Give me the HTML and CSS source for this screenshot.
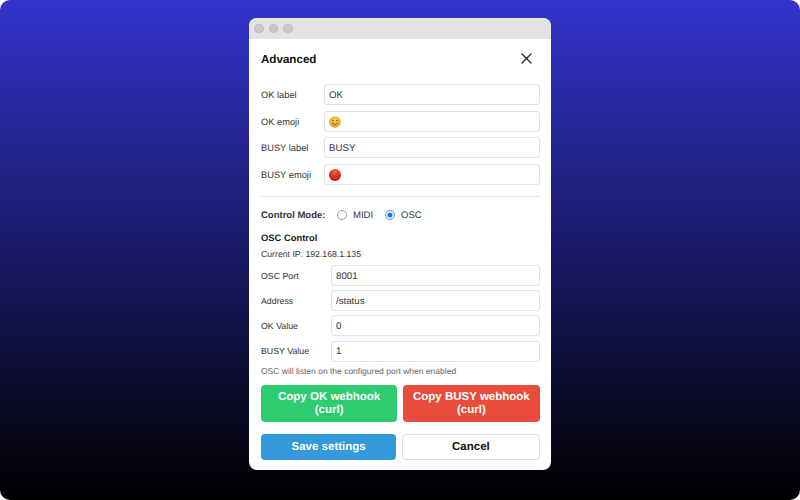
FILE: index.html
```html
<!DOCTYPE html>
<html lang="en">
<head>
    <meta charset="UTF-8">
    <title>Advanced</title>
    <link rel="stylesheet" href="styles.css">
</head>
<body>
    <div class="window">
        <div class="title-bar">
            <span class="light"></span>
            <span class="light"></span>
            <span class="light"></span>
        </div>
        <div class="content">
            <div class="head">
                <h1>Advanced</h1>
                <svg class="close" width="11" height="11" viewBox="0 0 11 11">
                    <path d="M1 1 L10 10 M10 1 L1 10" stroke="#222" stroke-width="1.3" stroke-linecap="round" fill="none"/>
                </svg>
            </div>

            <div class="rows">
                <div class="row"><label>OK label</label><div class="field">OK</div></div>
                <div class="row">
                    <label>OK emoji</label>
                    <div class="field">
                        <svg width="12" height="12" viewBox="0 0 12 12">
                            <defs>
                                <radialGradient id="smile" cx="50%" cy="35%" r="65%">
                                    <stop offset="0" stop-color="#fbd65c"/>
                                    <stop offset="1" stop-color="#ec9a1e"/>
                                </radialGradient>
                            </defs>
                            <circle cx="6" cy="6" r="5.8" fill="url(#smile)"/>
                            <ellipse cx="4" cy="4.6" rx="0.7" ry="0.9" fill="#6b4210"/>
                            <ellipse cx="8" cy="4.6" rx="0.7" ry="0.9" fill="#6b4210"/>
                            <path d="M3 7 Q6 10 9 7" stroke="#8a5512" stroke-width="0.9" fill="none"/>
                        </svg>
                    </div>
                </div>
                <div class="row"><label>BUSY label</label><div class="field">BUSY</div></div>
                <div class="row">
                    <label>BUSY emoji</label>
                    <div class="field">
                        <svg width="12" height="12" viewBox="0 0 12 12">
                            <defs>
                                <radialGradient id="red" cx="50%" cy="25%" r="75%">
                                    <stop offset="0" stop-color="#f0604a"/>
                                    <stop offset="1" stop-color="#c01408"/>
                                </radialGradient>
                            </defs>
                            <circle cx="6" cy="6" r="6" fill="url(#red)"/>
                        </svg>
                    </div>
                </div>
            </div>

            <hr>

            <div class="mode">
                <strong>Control Mode:</strong>
                <span class="radio"></span><span class="radio-text">MIDI</span>
                <span class="radio on"></span><span class="radio-text">OSC</span>
            </div>

            <h2>OSC Control</h2>
            <p class="ip">Current IP: 192.168.1.135</p>

            <div class="rows osc">
                <div class="row"><label>OSC Port</label><div class="field">8001</div></div>
                <div class="row"><label>Address</label><div class="field">/status</div></div>
                <div class="row"><label>OK Value</label><div class="field">0</div></div>
                <div class="row"><label>BUSY Value</label><div class="field">1</div></div>
            </div>
            <p class="hint">OSC will listen on the configured port when enabled</p>

            <div class="buttons webhooks">
                <button class="green">Copy OK webhook (curl)</button>
                <button class="red">Copy BUSY webhook (curl)</button>
            </div>
            <div class="buttons actions">
                <button class="blue">Save settings</button>
                <button class="cancel">Cancel</button>
            </div>
        </div>
    </div>
</body>
</html>
```

FILE: styles.css
```css
html, body {
    height: 100%;
}
html {
    background: white;
}
body {
    margin: 0;
    font-family: "Liberation Sans", Arial, sans-serif;
    text-rendering: geometricPrecision;
    background: linear-gradient(to bottom, #3333cc, #000);
    border-radius: 10px;
    color: #222;
    overflow: hidden;
}
.window {
    width: 302px;
    height: 452px;
    margin: 0 auto;
    position: relative;
    top: 18px;
    background: white;
    border-radius: 8px;
    overflow: hidden;
}
.title-bar {
    display: flex;
    align-items: center;
    gap: 5px;
    height: 21px;
    padding: 0 5px;
    background: #e3e3e3;
}
.light {
    width: 9.5px;
    height: 9.5px;
    box-sizing: border-box;
    border-radius: 50%;
    background: #c9c9c9;
    border: 0.5px solid #b8b8b8;
}
.content {
    padding: 0 11.5px 0 12px;
}
.head {
    display: flex;
    justify-content: space-between;
    align-items: center;
    height: 40px;
    padding-right: 8px;
    margin-bottom: 5px;
}
h1 {
    margin: 0;
    font-size: 11.6px;
    font-weight: 700;
    color: #111;
}
.close {
    margin-bottom: 1px;
}
.rows {
    display: flex;
    flex-direction: column;
    gap: 5.5px;
}
.row {
    display: flex;
    align-items: center;
}
.row label {
    width: 63px;
    padding-top: 1px;
    font-size: 9.3px;
    color: #333;
}
.field {
    flex: 1;
    display: flex;
    align-items: center;
    height: 18px;
    padding: 1px 4px 0;
    border: 1px solid #e2e2e2;
    border-radius: 3px;
    font-size: 9.7px;
    color: #333;
}
hr {
    margin: 11.5px 0 0;
    border: none;
    border-top: 1px solid #e2e2e2;
}
.mode {
    display: flex;
    align-items: center;
    height: 16px;
    margin-top: 10px;
    font-size: 9.5px;
    color: #333;
}
.mode strong {
    font-weight: 700;
    width: 76px;
}
.radio {
    width: 8px;
    height: 8px;
    border: 1px solid #999;
    border-radius: 50%;
    margin-right: 6px;
}
.radio.on {
    background: #1a73e8;
    border-color: #6ea8ef;
    box-shadow: inset 0 0 0 1.5px white;
}
.radio-text {
    margin-right: 12px;
}
h2 {
    margin: 7.5px 0 0;
    font-size: 9.4px;
    font-weight: 700;
    color: #222;
    line-height: 13px;
}
.ip {
    margin: 4px 0 0;
    font-size: 8.7px;
    line-height: 13px;
    color: #333;
}
.osc {
    margin-top: 4.5px;
    gap: 4.2px;
}
.osc label {
    width: 70px;
    padding-top: 0;
    font-size: 8.8px;
}
.hint {
    margin: 3px 0 0;
    font-size: 8.5px;
    line-height: 12px;
    color: #666;
}
.buttons {
    display: flex;
    gap: 6px;
}
.buttons button {
    flex: 1;
    border: none;
    border-radius: 4px;
    font-family: inherit;
    text-rendering: inherit;
    font-size: 11.5px;
    font-weight: 700;
    color: white;
    padding: 0 6px;
    line-height: 13px;
}
.webhooks {
    margin-top: 8px;
    height: 37px;
}
.webhooks button {
    padding-top: 2px;
}
.actions {
    margin-top: 12px;
    height: 26px;
}
.actions button {
    padding-top: 1px;
}
.green { background: #2ecc71; }
.red { background: #e74c3c; }
.blue { background: #3498db; }
.buttons .cancel {
    background: white;
    color: #111;
    border: 1px solid #ddd;
}
```
